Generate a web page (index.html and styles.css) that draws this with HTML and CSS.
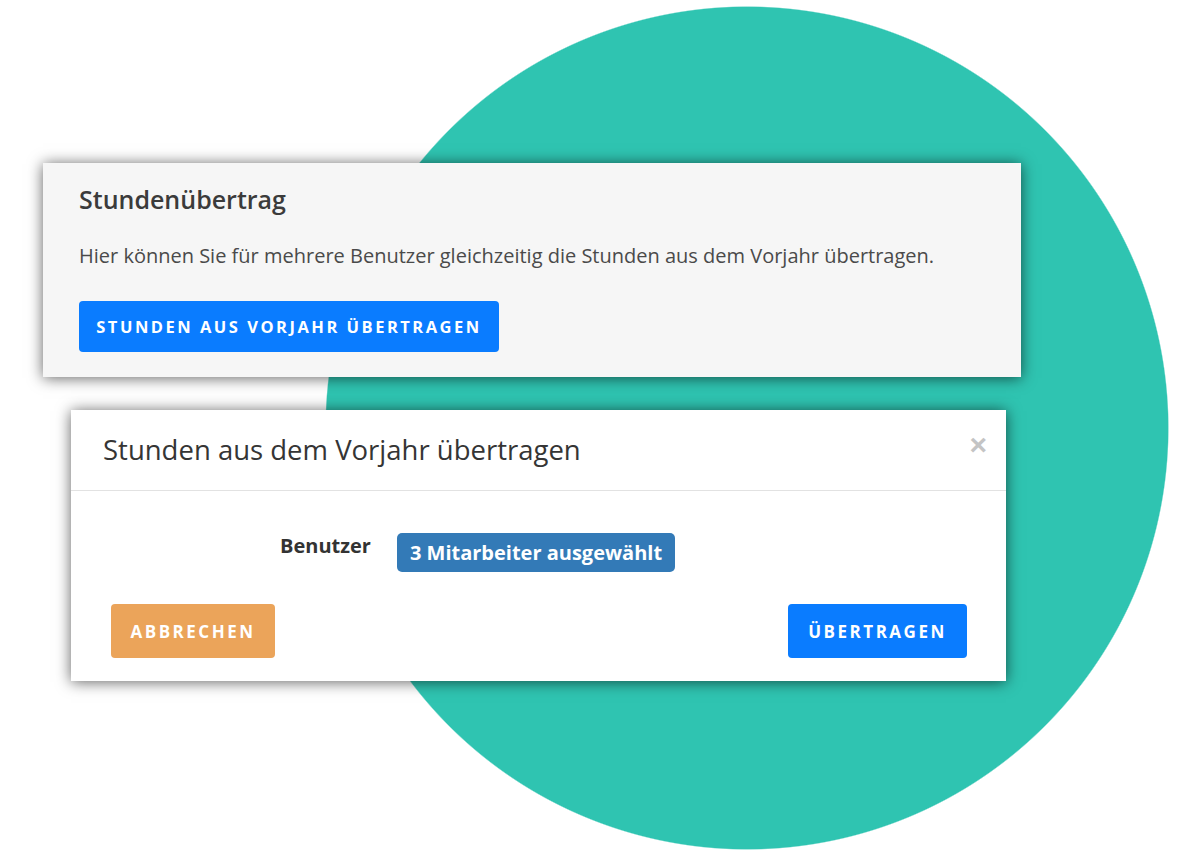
FILE: index.html
```html
<!DOCTYPE html>
<html lang="de">
<head>
<meta charset="utf-8">
<title>Stundenübertrag</title>
<link rel="stylesheet" href="styles.css">
</head>
<body>
<main class="stage">
  <section class="panel">
    <h2 class="panel-title">Stundenübertrag</h2>
    <p class="panel-text">Hier können Sie für mehrere Benutzer gleichzeitig die Stunden aus dem Vorjahr übertragen.</p>
    <button class="btn btn-blue btn-wide" type="button">Stunden aus Vorjahr übertragen</button>
  </section>

  <section class="modal">
    <header class="modal-head">
      <h3 class="modal-title">Stunden aus dem Vorjahr übertragen</h3>
      <span class="modal-close">×</span>
    </header>
    <div class="modal-body">
      <div class="field">
        <span class="field-label">Benutzer</span>
        <span class="badge">3 Mitarbeiter ausgewählt</span>
      </div>
      <div class="actions">
        <button class="btn btn-orange" type="button">Abbrechen</button>
        <button class="btn btn-blue" type="button">Übertragen</button>
      </div>
    </div>
  </section>
</main>
</body>
</html>
```
FILE: styles.css
```css
html, body {
  margin: 0;
  padding: 0;
}
body {
  width: 1194px;
  height: 856px;
  overflow: hidden;
  background: #ffffff radial-gradient(circle 422px at 747px 428px, #2fc4b1 99.7%, rgba(47,196,177,0) 100%) no-repeat;
  font-family: "Open Sans", "Noto Sans", "Liberation Sans", sans-serif;
  color: #3a3a3a;
}
.stage {
  display: flex;
  flex-direction: column;
  padding-top: 163px;
}
.panel {
  box-sizing: border-box;
  margin-left: 43px;
  width: 978px;
  height: 214px;
  background: #f6f6f6;
  box-shadow: 0 1px 14px rgba(0,0,0,0.62);
  padding: 19px 36px 0;
}
.panel-title {
  margin: 0;
  font-size: 25px;
  font-weight: 600;
  line-height: 34px;
  color: #3b3b3b;
}
.panel-text {
  margin: 27px 0 0;
  font-size: 20px;
  line-height: 26px;
  color: #4a4a4a;
}
.btn {
  border: 0;
  border-radius: 4px;
  color: #fff;
  font-family: "Open Sans", "Noto Sans", sans-serif;
  font-weight: 700;
  text-transform: uppercase;
  cursor: pointer;
  display: flex;
  align-items: center;
  justify-content: center;
  padding: 0;
}
.btn-blue { background: #0a7cff; }
.btn-orange { background: #eba45a; }
.btn-wide {
  margin-top: 32px;
  width: 420px;
  height: 51px;
  font-size: 16.5px;
  letter-spacing: 2.5px;
}
.modal {
  box-sizing: border-box;
  margin-top: 33px;
  margin-left: 71px;
  width: 935px;
  height: 271px;
  background: #ffffff;
  box-shadow: 0 1px 14px rgba(0,0,0,0.62);
  display: flex;
  flex-direction: column;
}
.modal-head {
  height: 81px;
  box-sizing: border-box;
  border-bottom: 1px solid #e2e2e2;
  display: flex;
  align-items: flex-start;
  justify-content: space-between;
  padding: 0 19px 0 32px;
}
.modal-title {
  margin: 21px 0 0;
  font-size: 27.5px;
  font-weight: 400;
  line-height: 38px;
  color: #353535;
}
.modal-close {
  margin-top: 20px;
  font-family: "Liberation Sans", Arial, sans-serif;
  font-size: 30px;
  line-height: 30px;
  font-weight: 700;
  color: #c4c4c4;
}
.modal-body {
  display: flex;
  flex-direction: column;
  padding: 42px 39px 0 40px;
}
.field {
  display: flex;
  align-items: flex-start;
  gap: 26px;
  padding-left: 169px;
}
.field-label {
  font-size: 20px;
  font-weight: 700;
  line-height: 26px;
  color: #333;
}
.badge {
  background: #337ab7;
  color: #fff;
  border-radius: 5px;
  font-size: 20px;
  font-weight: 700;
  height: 39px;
  line-height: 39px;
  padding: 0 13px;
  box-sizing: border-box;
}
.actions {
  display: flex;
  justify-content: space-between;
  margin-top: 32px;
}
.actions .btn {
  height: 54px;
  font-size: 17px;
  letter-spacing: 2.5px;
  border-radius: 4px;
}
.btn-orange { width: 164px; }
.actions .btn-blue { width: 179px; }
```
